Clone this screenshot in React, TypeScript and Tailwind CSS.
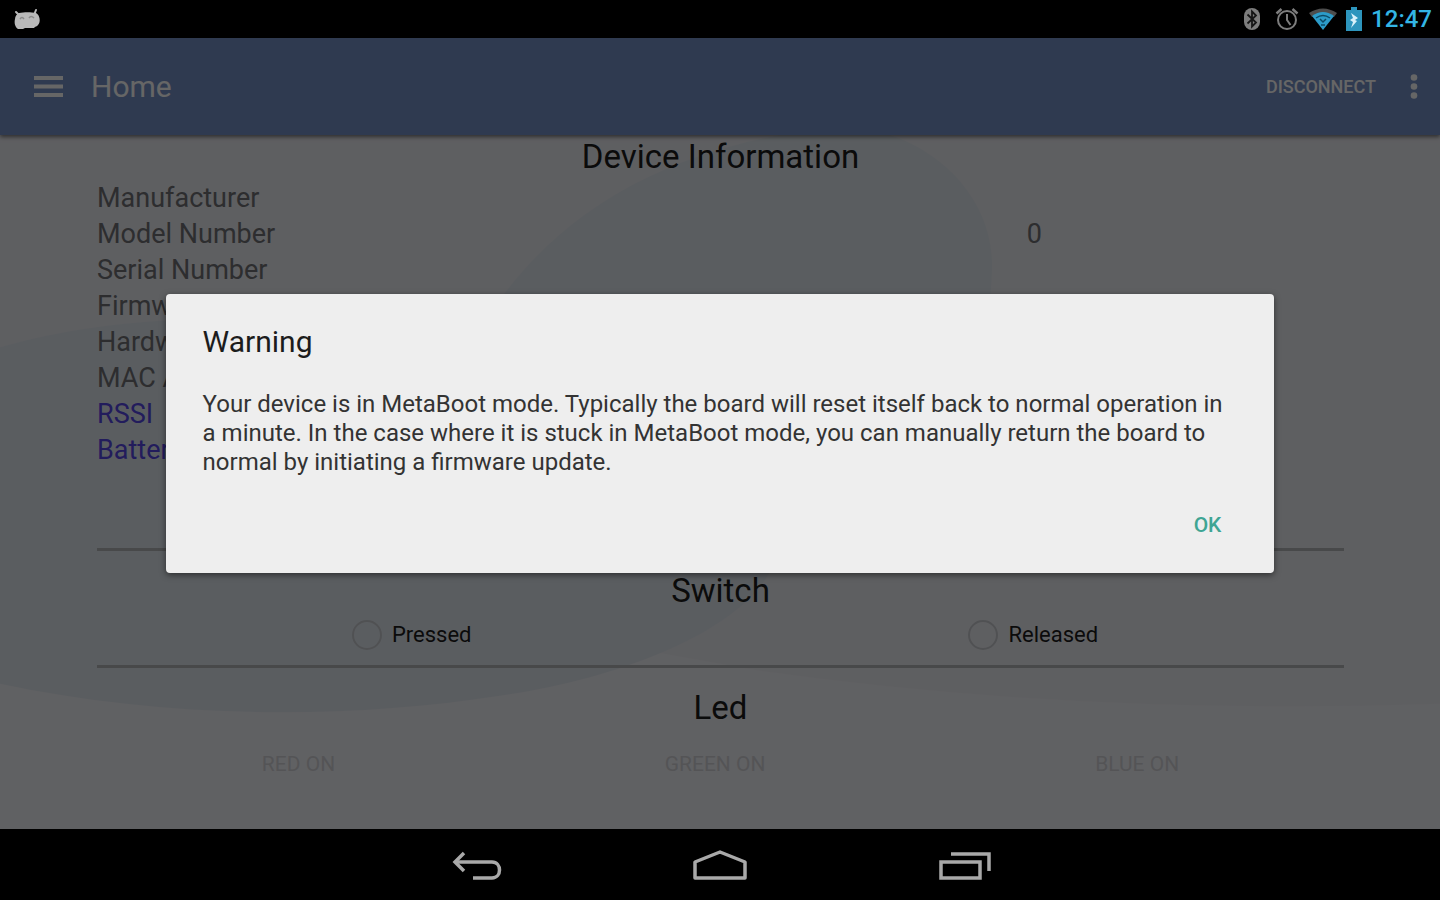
import { useState } from 'react'

interface InfoRow {
  label: string;
  value: string;
  live?: boolean;
}

const rows: InfoRow[] = [
  { label: 'Manufacturer', value: '' },
  { label: 'Model Number', value: '0' },
  { label: 'Serial Number', value: '' },
  { label: 'Firmware', value: '' },
  { label: 'Hardware', value: '' },
  { label: 'MAC Address', value: '' },
  { label: 'RSSI', value: '', live: true },
  { label: 'Battery', value: '', live: true },
]

const StatusBar = () => (
  <div className="h-[38px] shrink-0 bg-black flex items-center justify-between pl-3.5 pr-2">
    <svg width="28" height="22" viewBox="0 0 28 22" aria-hidden="true">
      <path d="M2 4L6 8M22 2L20 7" stroke="#b9b9b9" strokeWidth="2" strokeLinecap="round" />
      <path d="M5 5C10 4 17 4 22 5C26 7 27 14 24 17C23 19 21 18 20 20H17L16 20H11L9 21H4C1 19 0 15 1 11C1 8 3 6 5 5Z" fill="#b9b9b9" />
      <path d="M6 11Q8 8 10 11M15 10Q17 7 20 10" stroke="#8a8a8a" strokeWidth="1.500" fill="none" />
    </svg>
    <div className="flex items-center">
      <svg className="mr-3.5" width="18" height="24" viewBox="0 0 18 24" aria-hidden="true">
        <rect x="1" y="1" width="16" height="22" rx="8" fill="#7d7d7d" />
        <path d="M4.500 7.500L13 15.500L9 19.500V4.500L13 8.500L4.500 16.500" stroke="#161616" strokeWidth="1.800" fill="none" />
      </svg>
      <svg className="mr-2.5" width="24" height="24" viewBox="0 0 24 24" fill="none" stroke="#7d7d7d" aria-hidden="true">
        <circle cx="12" cy="13" r="9" strokeWidth="2" />
        <path d="M12 7V13L15.500 18" strokeWidth="2" />
        <path d="M1.500 6.500L6.500 2M22.500 6.500L17.500 2" strokeWidth="2.500" />
      </svg>
      <svg className="mr-2" width="28" height="24" viewBox="0 0 28 24" aria-hidden="true">
        <path d="M0 6Q14 -3 28 6L25 10Q14 2 3 10Z" fill="#4d4d4d" />
        <path d="M3 9Q14 1 25 9L14 23Z" fill="#2c9cc9" />
        <path d="M7 11Q14 6 21 11M11 12L14 15L17 12M12 18H16" stroke="#0b4a66" strokeWidth="1.500" fill="none" />
      </svg>
      <svg className="mr-2" width="18" height="26" viewBox="0 0 18 26" aria-hidden="true">
        <path d="M6 1H12V4H17V25H1V4H6Z" fill="#2d95bd" />
        <path d="M6 7L13 12L10 14L12 15L6 22L8 16L5 14L8 12Z" fill="#d8f1fa" />
      </svg>
      <span className="text-[24px] leading-[38px] font-medium text-[#33b5e5]">12:47</span>
    </div>
  </div>
)

const AppBar = () => (
  <header className="relative z-10 h-[97px] shrink-0 bg-[#7691c8] shadow-[0_2px_4px_rgba(0,0,0,0.5)] flex items-center justify-between pl-[34px] pr-5 text-white">
    <div className="flex items-center gap-7">
      <button aria-label="Open menu">
        <svg width="29" height="22" viewBox="0 0 29 22" fill="currentColor">
          <path d="M0 0H29V4H0ZM0 8.500H29V12.500H0ZM0 17H29V21H0Z" />
        </svg>
      </button>
      <h1 className="text-[30px] leading-9">Home</h1>
    </div>
    <div className="flex items-center gap-8">
      <button className="text-[18px] leading-7 font-medium">DISCONNECT</button>
      <button aria-label="More options">
        <svg width="12" height="26" viewBox="0 0 12 26" fill="currentColor">
          <circle cx="6" cy="3.500" r="3.300" />
          <circle cx="6" cy="12.500" r="3.300" />
          <circle cx="6" cy="21.500" r="3.300" />
        </svg>
      </button>
    </div>
  </header>
)

// soft curved shapes behind the page content
const Backdrop = () => (
  <svg className="absolute inset-0 w-full h-full" viewBox="0 0 1440 693" preserveAspectRatio="none" aria-hidden="true">
    <path d="M760 535Q1080 580 1440 568V0H0V400Z" fill="#ecedf3" />
    <path d="M460 230C520 110 620 30 780 0H890C950 20 990 70 992 125C994 260 900 400 720 440H300Z" fill="#e2e9f0" />
    <path d="M0 212C60 195 120 186 200 184L780 400C780 480 640 540 500 560C340 585 160 582 0 548Z" fill="#e2e9f1" />
  </svg>
)

const NavBar = () => (
  <nav className="h-[71px] shrink-0 bg-black flex justify-center items-center gap-[188px] pt-0.5 text-[#a9a9a9]">
    <button aria-label="Back">
      <svg width="56" height="36" viewBox="0 0 56 36" fill="none" stroke="currentColor" strokeWidth="3.500">
        <path d="M7 14H44C54 14 54 30 44 30H25" />
        <path d="M16 5L7 14L16 23" />
      </svg>
    </button>
    <button aria-label="Home">
      <svg width="56" height="36" viewBox="0 0 56 36" fill="none" stroke="currentColor" strokeWidth="3.500">
        <path d="M3 30V14L28 4L53 14V30Z" strokeLinejoin="round" />
      </svg>
    </button>
    <button aria-label="Recent apps">
      <svg width="56" height="36" viewBox="0 0 56 36" fill="none" stroke="currentColor" strokeWidth="3.500">
        <path d="M5 14H44V30H5Z" />
        <path d="M15 6H53V23" />
      </svg>
    </button>
  </nav>
)

const App = () => {
  const [open, setOpen] = useState(true)
  const [pressed, setPressed] = useState<string | null>(null)

  return (
    <div className="h-screen flex flex-col bg-black font-[Roboto,sans-serif]">
      <StatusBar />

      <div className="relative flex-1 min-h-0 flex flex-col">
        <AppBar />

        <main className="relative flex-1 min-h-0 overflow-hidden bg-[#f1f2f7]">
          <Backdrop />
          <div className="relative pl-[97px] pr-24 text-[#1c1c1c]">
            <h2 className="mb-px text-[33px] leading-11 text-center">Device Information</h2>
            <table className="w-full text-[27px] leading-9 text-[#707276]">
              <tbody>
                {rows.map((row) => (
                  <tr key={row.label}>
                    <th className={`w-1/2 p-0 text-left font-normal ${row.live ? 'text-[#5646e6]' : ''}`}>{row.label}</th>
                    <td className="p-0 pl-1 text-center">{row.value}</td>
                  </tr>
                ))}
              </tbody>
            </table>

            <hr className="mt-20 border-t-[3px] border-[#b4b7ba]" />

            <h2 className="pt-[18px] text-[33px] leading-11 text-center">Switch</h2>
            <div className="grid grid-cols-2 pt-1 pl-1">
              {['Pressed', 'Released'].map((name) => (
                <label key={name} className="flex items-center justify-center gap-2.5 text-[22px] leading-9">
                  <input
                    type="radio"
                    name="switch"
                    checked={pressed === name}
                    onChange={() => setPressed(name)}
                    className="appearance-none w-[30px] h-[30px] rounded-full border-2 border-[#c8cbd0] checked:bg-[#c8cbd0]"
                  />
                  {name}
                </label>
              ))}
            </div>

            <hr className="mt-3 border-t-[3px] border-[#b4b7ba]" />

            <h2 className="pt-[18px] text-[33px] leading-11 text-center">Led</h2>
            <div className="flex justify-around pt-4 text-[21px] leading-9 text-[#d2d3d7]">
              <button>RED ON</button>
              <button>GREEN ON</button>
              <button>BLUE ON</button>
            </div>
          </div>
        </main>

        {open && (
          <div className="absolute inset-0 z-20 bg-black/60 flex items-center justify-center">
            <div role="dialog" aria-labelledby="warning-title" className="w-[77%] bg-[#eee] rounded-sm shadow-[0_2px_6px_rgba(0,0,0,0.5)] px-[37px] pt-7 pb-[30px]">
              <h2 id="warning-title" className="text-[30px] leading-10 text-[#1c1c1c]">Warning</h2>
              <p className="pt-7 text-[24px] leading-[29px] text-[#333]">
                Your device is in MetaBoot mode. Typically the board will reset itself back to normal operation in
                a minute. In the case where it is stuck in MetaBoot mode, you can manually return the board to
                normal by initiating a firmware update.
              </p>
              <div className="flex justify-end pt-[30px] pr-4">
                <button onClick={() => setOpen(false)} className="text-[21px] leading-9 font-medium text-[#3fa594]">OK</button>
              </div>
            </div>
          </div>
        )}
      </div>

      <NavBar />
    </div>
  )
}

export default App
